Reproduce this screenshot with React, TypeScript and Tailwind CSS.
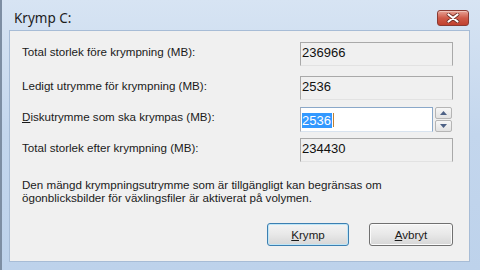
function ReadOnlyField({ value }: { value: string }) {
  return (
    <div className="h-[24px] w-[153px] border border-[#a9a9a9] border-b-[#e2e2e2] bg-[#f0f0f0] pl-[1px] pt-[2px] text-[13px] leading-[15px] text-[#111]">
      {value}
    </div>
  );
}

function Row({ label, children, className = "" }: { label: React.ReactNode; children: React.ReactNode; className?: string }) {
  return (
    <div className={"flex items-start " + className}>
      <div className="w-[278px] pt-[2px] text-[11.6px] leading-[15px] text-[#1a1a1a]">{label}</div>
      {children}
    </div>
  );
}

function SpinArrow({ down }: { down?: boolean }) {
  return (
    <div className="flex h-[12px] w-[17px] items-center justify-center rounded-[2px] border border-[#b5b5b5] bg-gradient-to-b from-[#f7f7f7] to-[#e2e2e2]">
      <svg width="7" height="4" viewBox="0 0 7 4" className={down ? "rotate-180" : ""}>
        <polygon points="3.5,0 7,4 0,4" fill="#4d6185" />
      </svg>
    </div>
  );
}

function DialogButton({ children, isDefault }: { children: React.ReactNode; isDefault?: boolean }) {
  return (
    <button
      className={
        "flex h-[23px] items-center justify-center rounded-[3px] border bg-gradient-to-b from-[#f4f4f4] via-[#e8e8e8] to-[#d6d6d6] text-[11.6px] text-[#1a1a1a] " +
        (isDefault ? "w-[82px] border-[#3c7fb1] shadow-[inset_0_0_0_1px_#bfe6f7]" : "w-[84px] border-[#707070] shadow-[inset_0_0_0_1px_#fbfbfb]")
      }
    >
      {children}
    </button>
  );
}

export default function App() {
  return (
    <div
      className="flex h-[270px] w-[480px] flex-col bg-gradient-to-b from-[#d7e4f3] via-[#c3d6ed] to-[#bdd2eb] font-['Liberation_Sans',Arial,sans-serif]"
      style={{ borderLeft: "2px solid #7d8ea3" }}
    >
      {/* title bar */}
      <div className="flex h-[30px] items-start justify-between pl-[12px] pr-[11px]">
        <span className="pt-[10px] font-['Noto_Sans',sans-serif] text-[13.5px] leading-[16px] text-[#1c1c1c]">Krymp C:</span>
        <div className="mt-[10px] flex h-[16px] w-[32px] items-center justify-center rounded-[3px] border border-[#8a3a32] bg-gradient-to-b from-[#e6a195] via-[#cf5a48] to-[#c0402e] shadow-[inset_0_1px_0_#f0c0b5]">
          <svg width="14" height="10" viewBox="0 0 14 10">
            <path d="M2.5 1.5 L11.5 8.5 M11.5 1.5 L2.5 8.5" stroke="#6a2a22" strokeWidth="3.6" strokeLinecap="round" />
            <path d="M2.5 1.5 L11.5 8.5 M11.5 1.5 L2.5 8.5" stroke="#ffffff" strokeWidth="2.2" strokeLinecap="round" />
          </svg>
        </div>
      </div>

      {/* client area */}
      <div className="mb-[8px] ml-[7px] mr-[10px] flex flex-1 flex-col border border-[#a7bcd6] bg-[#f0f0f0] pl-[12px] pt-[11px]">
        <Row label="Total storlek före krympning (MB):">
          <ReadOnlyField value="236966" />
        </Row>
        <Row label="Ledigt utrymme för krympning (MB):" className="mt-[10px]">
          <ReadOnlyField value="2536" />
        </Row>
        <Row
          label={
            <>
              <span className="underline">D</span>iskutrymme som ska krympas (MB):
            </>
          }
          className="mt-[7px]"
        >
          <div className="flex w-[153px] items-stretch gap-[2px]">
            <div className="h-[25px] flex-1 border border-[#8aa8c9] border-l-[#abadb3] border-b-[#d8e3ef] bg-white pl-[1px] pt-[3px] text-[13px] leading-[15px]">
              <span className="bg-[#3399ff] pr-[1px] text-white">2536</span>
              <span className="ml-[1px] inline-block h-[14px] w-[1px] translate-y-[2px] bg-[#c28030]" />
            </div>
            <div className="flex flex-col gap-[1px] pr-[1px]">
              <SpinArrow />
              <SpinArrow down />
            </div>
          </div>
        </Row>
        <Row label="Total storlek efter krympning (MB):" className="mt-[6px]">
          <ReadOnlyField value="234430" />
        </Row>

        <p className="mt-[16px] text-[11.6px] leading-[13px] text-[#1a1a1a]">
          Den mängd krympningsutrymme som är tillgängligt kan begränsas om
          <br />
          ögonblicksbilder för växlingsfiler är aktiverat på volymen.
        </p>

        <div className="mt-[19px] flex justify-end gap-[20px] pr-[16px]">
          <DialogButton isDefault>
            <span>
              <span className="underline">K</span>rymp
            </span>
          </DialogButton>
          <DialogButton>
            <span>
              <span className="underline">A</span>vbryt
            </span>
          </DialogButton>
        </div>
      </div>
    </div>
  );
}
